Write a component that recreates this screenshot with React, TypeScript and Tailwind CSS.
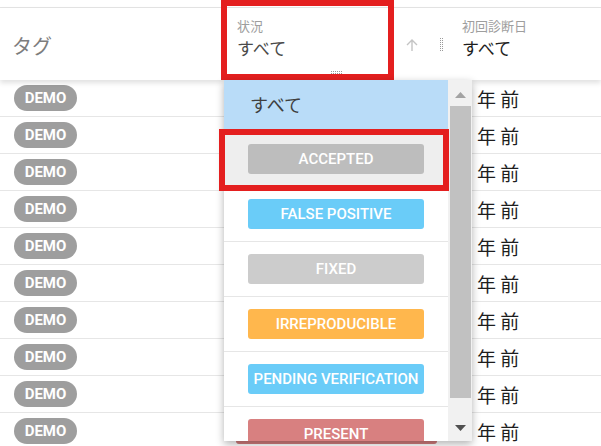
import React from "react";

const jp = { fontFamily: '"Noto Sans CJK JP", "Noto Sans", sans-serif' };
const rb = { fontFamily: 'Roboto, "Liberation Sans", sans-serif' };

const statuses = [
  { label: "ACCEPTED", cls: "bg-[#bdbdbd]" },
  { label: "FALSE POSITIVE", cls: "bg-[#6accf8]" },
  { label: "FIXED", cls: "bg-[#cccccc]" },
  { label: "IRREPRODUCIBLE", cls: "bg-[#ffb74d]" },
  { label: "PENDING VERIFICATION", cls: "bg-[#6accf8]" },
  { label: "PRESENT", cls: "bg-[#d88080]" },
];

function Row() {
  return (
    <div className="flex h-[37px] items-center border-b border-[#e6e6e6]">
      <div className="w-[224px] pl-[14px] flex items-center">
        <span
          style={rb}
          className="h-[26px] w-[63px] rounded-full bg-[#9e9e9e] text-white text-[15px] font-bold flex items-center justify-center"
        >
          DEMO
        </span>
      </div>
      <div className="w-[226px] pl-[12px] flex items-center">
        <span className="h-[26px] w-[201px] rounded-[3px] bg-[#d27c7c]" />
      </div>
      <div style={jp} className="pl-[27px] text-[19px] text-[#1e1e1e] leading-none">
        年 前
      </div>
    </div>
  );
}

export default function App() {
  return (
    <div className="relative w-[601px] h-[446px] overflow-hidden bg-white">
      <div className="h-[8px] border-b border-[#e4e4e4]" />
      {/* header */}
      <div className="relative z-10 flex h-[72px] bg-white shadow-[0_3px_5px_rgba(0,0,0,0.12)]">
        <div className="w-[220px] pl-[12px] pt-[28px]">
          <span style={jp} className="text-[20px] text-[#7d7d7d] leading-none">
            タグ
          </span>
        </div>
        <div className="w-[230px] relative flex">
          <div className="pl-[17px] pt-[10px] flex flex-col">
            <span style={jp} className="text-[13px] text-[#9e9e9e] leading-[16px]">
              状況
            </span>
            <span style={jp} className="text-[17px] text-[#4a4a4a] leading-[24px] mt-[2px]">
              すべて
            </span>
          </div>
          <svg className="absolute left-[185px] top-[30px]" width="14" height="14" viewBox="0 0 14 14">
            <path d="M7 13V2M2 7l5-5 5 5" stroke="#c4c4c4" strokeWidth="1.4" fill="none" />
          </svg>
          <svg className="absolute left-[220px] top-[30px]" width="3" height="13" viewBox="0 0 3 13">
            {[0, 2, 4, 6, 8, 10, 12].map((y) => (
              <g key={y}>
                <rect x="0" y={y} width="1" height="1" fill="#9a9a9a" />
                <rect x="2" y={y} width="1" height="1" fill="#9a9a9a" />
              </g>
            ))}
          </svg>
          <svg className="absolute left-[111px] top-[63px]" width="11" height="3" viewBox="0 0 11 3">
            {[0, 2, 4, 6, 8, 10].map((x) => (
              <g key={x}>
                <rect x={x} y="0" width="1" height="1" fill="#999" />
                <rect x={x} y="2" width="1" height="1" fill="#999" />
              </g>
            ))}
          </svg>
        </div>
        <div className="pl-[12px] pt-[10px] flex flex-col">
          <span style={jp} className="text-[13px] text-[#9e9e9e] leading-[16px]">
            初回診断日
          </span>
          <span style={jp} className="text-[17px] text-[#1e1e1e] leading-[24px] mt-[2px]">
            すべて
          </span>
        </div>
      </div>
      {/* rows */}
      <div>
        {Array.from({ length: 10 }).map((_, i) => (
          <Row key={i} />
        ))}
      </div>

      {/* red annotation around header filter */}
      <div className="absolute left-[221px] top-0 w-[173px] h-[80px] border-[6px] border-[#e41f1f] z-20" />

      {/* dropdown */}
      <div className="absolute left-[224px] top-[80px] w-[248px] h-[361px] bg-white z-30 flex shadow-[0_3px_8px_rgba(0,0,0,0.3)]">
        <div className="w-[224px] flex flex-col overflow-hidden">
          <div className="h-[52px] shrink-0 bg-[#b9dcf8] flex items-center pl-[26px] pb-[4px]">
            <span style={jp} className="text-[18px] text-[#3f3f3f] leading-none">
              すべて
            </span>
          </div>
          {statuses.map((s, i) => (
            <div
              key={s.label}
              className={
                "relative h-[55px] shrink-0 flex items-center px-[24px] border-b border-[#e6e6e6] " +
                (i === 0 ? "bg-[#eeeeee]" : "bg-white")
              }
            >
              <div
                style={rb}
                className={
                  "h-[30px] w-full rounded-[3px] text-white text-[15px] font-medium flex items-center justify-center " +
                  s.cls
                }
              >
                {s.label}
              </div>
            </div>
          ))}
        </div>
        {/* scrollbar */}
        <div className="w-[24px] bg-[#f1f1f1] relative">
          <svg className="absolute left-[7px] top-[12px]" width="11" height="6" viewBox="0 0 11 6">
            <path d="M0 6L5.5 0 11 6z" fill="#a3a3a3" />
          </svg>
          <div className="absolute left-[2px] top-[26px] w-[21px] h-[292px] bg-[#c1c1c1]" />
          <svg className="absolute left-[7px] top-[345px]" width="11" height="6" viewBox="0 0 11 6">
            <path d="M0 0L5.5 6 11 0z" fill="#505050" />
          </svg>
        </div>
        {/* red annotation around ACCEPTED */}
        <div className="absolute left-[-5px] top-[49px] w-[230px] h-[62px] border-[6px] border-[#e41f1f]" />
      </div>
    </div>
  );
}
